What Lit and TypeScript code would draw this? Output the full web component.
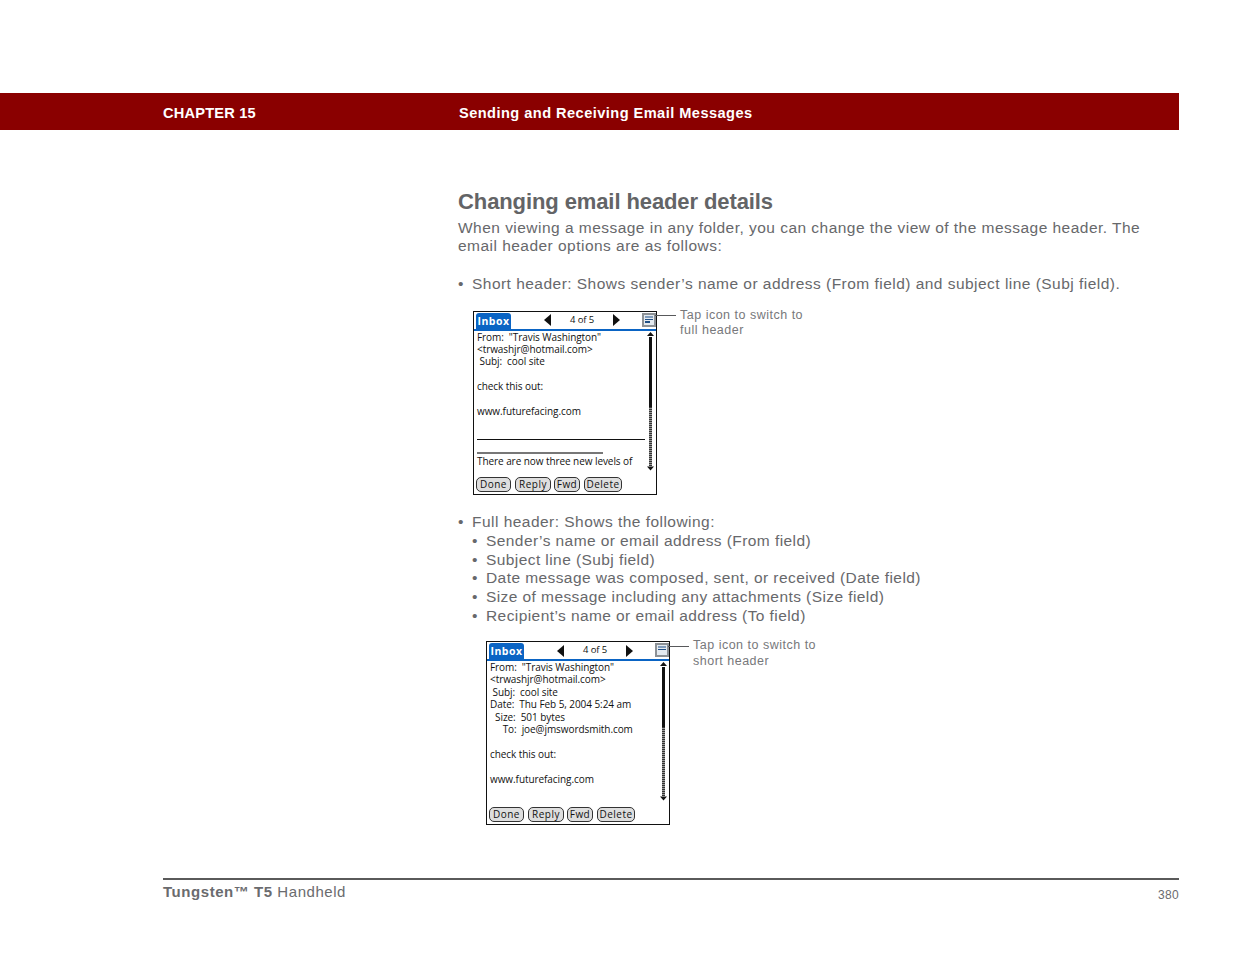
import { LitElement, html, css, svg } from "lit";
import { customElement, property } from "lit/decorators.js";

type Line = { t?: string; rule?: "black" | "gray" };

@customElement("palm-screen")
class PalmScreen extends LitElement {
  @property({ type: Array }) lines: Line[] = [];
  @property({ type: Number }) barEnd = 96;
  @property({ type: Boolean }) full = false;
  static styles = css`
    :host { display: block; width: 184px; height: 184px; flex: none; }
    .frame { box-sizing: border-box; width: 184px; height: 184px; border: 1px solid #111; background: #fff; display: flex; flex-direction: column; font-family: "Open Sans", "Liberation Sans", sans-serif; font-size: 10px; color: #111; }
    .head { display: flex; align-items: stretch; height: 17px; border-bottom: 2px solid #0a64c4; padding-left: 2px; flex: none; }
    .tab { width: 35px; background: #0a64c4; color: #fff; font-weight: 700; font-size: 10.5px; letter-spacing: .5px; border-radius: 3px 3px 0 0; display: flex; align-items: center; justify-content: center; padding-top: 1px; margin-top: 1px; box-sizing: border-box; }
    .nav { width: 131px; display: flex; align-items: center; }
    .nav svg { flex: none; display: block; }
    .count { width: 62px; text-align: center; font-size: 9.500px; font-weight: 500; letter-spacing: -.1px; }
    .arrow-l { margin-left: 33px; }
    .icon { margin: 1px 0 0 0; display: block; flex: none; }
    .main { flex: 1; display: flex; min-height: 0; }
    .text { width: 171px; padding-left: 3px; box-sizing: border-box; }
    .line { height: 12.4px; line-height: 12.4px; white-space: pre; letter-spacing: -.07px; font-weight: 500; }
    .rule { display: flex; flex-direction: column; justify-content: flex-end; padding-bottom: 2px; box-sizing: border-box; }
    .rule i { display: block; }
    .rule .black { height: 1px; background: #111; width: 168px; }
    .rule .gray { height: 2px; background: #777; width: 126px; margin-bottom: -1px; }
    .bar { display: block; }
    .btns { display: flex; gap: 4px; padding: 0 0 2px 2px; flex: none; height: 17px; box-sizing: border-box; }
    .btn { box-sizing: border-box; height: 15px; border: 1px solid #333; border-radius: 5px; background: #dedede; font-size: 10px; font-weight: 500; display: flex; align-items: center; justify-content: center; }
    .done { width: 35px; } .reply { width: 36px; } .fwd { width: 26px; margin-left: -1px; } .del { width: 38px; }
  `;
  render() {
    const dots = [];
    for (let y = this.barEnd; y < 135; y += 2) {
      dots.push(svg`<rect x="4" y="${y}" width="3" height="1" fill="#333"/>`);
    }
    return html`<div class="frame">
      <div class="head">
        <div class="tab">Inbox</div>
        <div class="nav">
          <svg class="arrow-l" width="7" height="12" viewBox="0 0 7 12"><path d="M7 0V12L0 6Z" fill="#111"/></svg>
          <span class="count">4 of 5</span>
          <svg width="7" height="12" viewBox="0 0 7 12"><path d="M0 0V12L7 6Z" fill="#111"/></svg>
        </div>
        <svg class="icon" width="14" height="14" viewBox="0 0 14 14">
          <rect width="14" height="14" fill="#8c9196"/>
          <rect x="2" y="2" width="10" height="10" fill="#e4eaf0"/>
          <path d="M3 4H11M3 6.500H11" stroke="#1f4f86" stroke-width="1"/>
          ${this.full ? svg`` : svg`<path d="M3 9H8" stroke="#1f4f86" stroke-width="2"/>`}
        </svg>
      </div>
      <div class="main">
        <div class="text">
          ${this.lines.map((l) =>
            l.rule
              ? html`<div class="line rule"><i class="${l.rule}"></i></div>`
              : html`<div class="line">${l.t ?? ""}</div>`
          )}
        </div>
        <svg class="bar" width="10" height="146" viewBox="0 0 10 146">
          <path d="M5.500 1L9 5H2Z" fill="#111"/>
          <rect x="4" y="6" width="3" height="${this.barEnd - 6}" fill="#111"/>
          <rect x="4" y="${this.barEnd}" width="3" height="${135 - this.barEnd}" fill="#999"/>
          ${dots}
          <path d="M2 135.500H9L5.500 139.500Z" fill="#111"/>
        </svg>
      </div>
      <div class="btns">
        <div class="btn done">Done</div>
        <div class="btn reply">Reply</div>
        <div class="btn fwd">Fwd</div>
        <div class="btn del">Delete</div>
      </div>
    </div>`;
  }
}

@customElement("app-root")
class AppRoot extends LitElement {
  static styles = css`
    :host { display: block; width: 1235px; height: 954px; background: #fff; font-family: "Liberation Sans", Arial, sans-serif; color: #67686b; overflow: hidden; }
    .top { height: 93px; }
    .band { display: flex; width: 1179px; height: 37px; background: #8a0000; color: #fff; font-weight: 700; font-size: 14.600px; align-items: center; box-sizing: border-box; padding: 3px 0 0 163px; }
    .chap { width: 296px; letter-spacing: .2px; }
    .sect { letter-spacing: .45px; }
    .main { margin-left: 458px; width: 700px; padding-top: 58px; font-size: 15.500px; line-height: 18.700px; letter-spacing: .47px; height: 743px; box-sizing: border-box; }
    h1 { margin: 0 0 3.500px; font-size: 22px; line-height: 27px; font-weight: 700; color: #636466; letter-spacing: -.1px; }
    p { margin: 0; }
    .b { display: flex; }
    .b .d { width: 14px; flex: none; }
    .gap1 { margin-top: 18.700px; }
    .fig { display: flex; align-items: flex-start; margin-left: 15px; margin-top: 17.300px; }
    .fig.two { margin-left: 28px; margin-top: 15.600px; }
    .leader { width: 21px; height: 1px; background: #58595b; margin: 4.400px 0 0 -2px; flex: none; }
    .two .leader { margin-top: 5.400px; }
    .cap { margin-left: 4px; font-size: 12.500px; line-height: 15.500px; letter-spacing: .5px; color: #77787b; margin-top: -3px; }
    .after { margin-top: 18.600px; }
    .sub { margin-left: 14px; letter-spacing: .42px; }
    .foot { margin: 5px 0 0 163px; width: 1016px; border-top: 2px solid #5a5a5a; display: flex; justify-content: space-between; align-items: flex-start; padding-top: 3px; }
    .foot .l { font-size: 15px; line-height: 18px; letter-spacing: .55px; color: #6a6b6e; }
    .foot .r { font-size: 12px; line-height: 14px; letter-spacing: .3px; margin-top: 5px; color: #6a6b6e; }
    b { font-weight: 700; }
  `;
  render() {
    const short: Line[] = [
      { t: 'From:  "Travis Washington"' }, { t: "<trwashjr@hotmail.com>" }, { t: " Subj:  cool site" }, {},
      { t: "check this out:" }, {}, { t: "www.futurefacing.com" }, {},
      { rule: "black" }, { rule: "gray" }, { t: "There are now three new levels of" },
    ];
    const full: Line[] = [
      { t: 'From:  "Travis Washington"' }, { t: "<trwashjr@hotmail.com>" }, { t: " Subj:  cool site" },
      { t: "Date:  Thu Feb 5, 2004 5:24 am" }, { t: "  Size:  501 bytes" }, { t: "     To:  joe@jmswordsmith.com" }, {},
      { t: "check this out:" }, {}, { t: "www.futurefacing.com" },
    ];
    return html`
      <div class="top"></div>
      <div class="band"><span class="chap">CHAPTER 15</span><span class="sect">Sending and Receiving Email Messages</span></div>
      <div class="main">
        <h1>Changing email header details</h1>
        <p>When viewing a message in any folder, you can change the view of the message header. The email header options are as follows:</p>
        <div class="b gap1"><span class="d">•</span><span>Short header: Shows sender’s name or address (From field) and subject line (Subj field).</span></div>
        <div class="fig">
          <palm-screen .lines=${short} .barEnd=${76}></palm-screen>
          <div class="leader"></div>
          <div class="cap">Tap icon to switch to<br />full header</div>
        </div>
        <div class="b after"><span class="d">•</span><span>Full header: Shows the following:</span></div>
        <div class="sub">
          ${[
            "Sender’s name or email address (From field)",
            "Subject line (Subj field)",
            "Date message was composed, sent, or received (Date field)",
            "Size of message including any attachments (Size field)",
            "Recipient’s name or email address (To field)",
          ].map((s) => html`<div class="b"><span class="d">•</span><span>${s}</span></div>`)}
        </div>
        <div class="fig two">
          <palm-screen .lines=${full} .barEnd=${66} .full=${true}></palm-screen>
          <div class="leader"></div>
          <div class="cap">Tap icon to switch to<br />short header</div>
        </div>
      </div>
      <div class="foot">
        <span class="l"><b>Tungsten™ T5</b> Handheld</span>
        <span class="r">380</span>
      </div>
    `;
  }
}
